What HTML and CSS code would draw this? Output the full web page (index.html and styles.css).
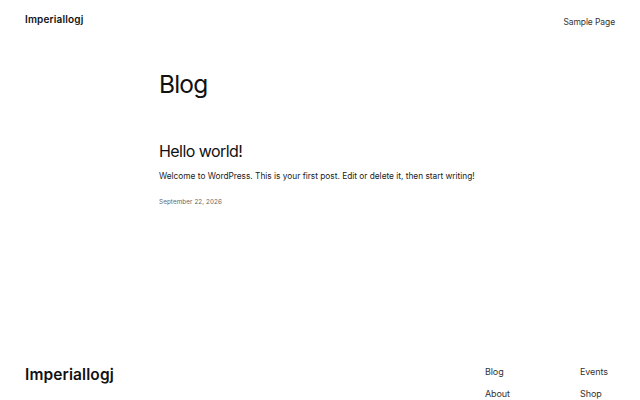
FILE: index.html
```html
<!DOCTYPE html>
<html>
<head>
<meta charset="utf-8">
<link rel="stylesheet" href="styles.css">
</head>
<body>
<header class="site-header">
  <a class="site-title" href="#">Imperiallogj</a>
  <nav class="header-nav"><a href="#">Sample Page</a></nav>
</header>
<main class="content">
  <h1 class="page-title">Blog</h1>
  <article class="post">
    <h2 class="post-title">Hello world!</h2>
    <p class="post-excerpt">Welcome to WordPress. This is your first post. Edit or delete it, then start writing!</p>
    <div class="post-date">September 22, 2026</div>
  </article>
</main>
<footer class="site-footer">
  <a class="footer-title" href="#">Imperiallogj</a>
  <nav class="footer-nav">
    <div class="footer-col">
      <a href="#">Blog</a>
      <a href="#">About</a>
    </div>
    <div class="footer-col">
      <a href="#">Events</a>
      <a href="#">Shop</a>
    </div>
  </nav>
</footer>
</body>
</html>
```
FILE: styles.css
```css
* { box-sizing: border-box; }
html, body { margin: 0; padding: 0; }
body {
  width: 640px;
  height: 400px;
  background: #fff;
  color: #111;
  font-family: Inter, "Noto Sans", sans-serif;
  display: flex;
  flex-direction: column;
  overflow: hidden;
}
a { color: inherit; text-decoration: none; }
.site-header {
  display: flex;
  justify-content: space-between;
  align-items: center;
  padding: 11px 25px 0 25px;
  height: 26px;
}
.site-title {
  font-size: 10px;
  font-weight: 600;
  letter-spacing: 0.15px;
}
.header-nav a {
  font-size: 8.5px;
  color: #333;
  letter-spacing: -0.1px;
}
.content {
  width: 322px;
  margin: 0 auto;
  flex: 1;
}
.page-title {
  margin: 42px 0 0 0;
  font-size: 24.5px;
  font-weight: 400;
  letter-spacing: -0.8px;
  line-height: 32px;
}
.post { margin-top: 40px; }
.post-title {
  margin: 0;
  font-size: 16px;
  font-weight: 400;
  letter-spacing: -0.55px;
  line-height: 22px;
}
.post-excerpt {
  margin: 8px 0 0 0;
  font-size: 8.3px;
  letter-spacing: 0;
  color: #222;
  line-height: 13px;
}
.post-date {
  margin-top: 15px;
  font-size: 6.3px;
  color: #666;
  letter-spacing: 0.1px;
}
.site-footer {
  display: flex;
  justify-content: space-between;
  align-items: flex-start;
  padding: 0 25px 0 25px;
  height: 48px;
}
.footer-title {
  font-size: 15.5px;
  font-weight: 600;
  letter-spacing: 0.1px;
  margin-top: 13px;
}
.footer-nav {
  display: flex;
  margin-top: 14px;
}
.footer-col {
  display: flex;
  flex-direction: column;
  gap: 11px;
  width: 95px;
  font-size: 9px;
  color: #333;
  letter-spacing: -0.1px;
}
.footer-col:last-child { width: 35px; }
```
